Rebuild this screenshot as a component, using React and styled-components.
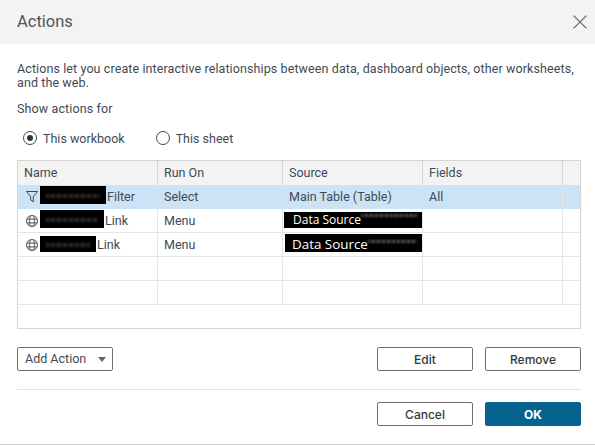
import React from "react";
import styled, { createGlobalStyle } from "styled-components";

const Global = createGlobalStyle`
  html, body { margin: 0; padding: 0; background: #fff; }
  #root { width: 595px; height: 445px; overflow: hidden; }
`;

const Dialog = styled.div`
  width: 595px;
  height: 445px;
  box-sizing: border-box;
  border-bottom: 1px solid #cbcbcb;
  display: flex;
  flex-direction: column;
  font-family: "Roboto", "Liberation Sans", sans-serif;
  font-size: 12.5px;
  color: #3f4a55;
  background: #fff;
`;

const Header = styled.header`
  height: 44px;
  flex: none;
  background: #f3f3f3;
  display: flex;
  align-items: center;
  justify-content: space-between;
  padding: 0 8px 0 17px;
`;

const Title = styled.h1`
  margin: 0 0 2px;
  font-size: 16.5px;
  font-weight: 400;
  color: #4e5459;
`;

const Close = styled.svg`
  width: 14px;
  height: 14px;
`;

const Body = styled.main`
  padding: 18px 14px 0 17px;
  display: flex;
  flex-direction: column;
`;

const Description = styled.p`
  margin: 0;
  width: 564px;
  line-height: 14px;
  letter-spacing: 0.1px;
`;

const SectionLabel = styled.div`
  margin-top: 12px;
  line-height: 14px;
  letter-spacing: 0.12px;
`;

const RadioRow = styled.div`
  display: flex;
  gap: 31px;
  margin: 15px 0 0 6px;
  height: 14px;
  align-items: center;
`;

const RadioOption = styled.label`
  display: flex;
  align-items: center;
  gap: 6px;
`;

const RadioDot = styled.span`
  width: 14px;
  height: 14px;
  box-sizing: border-box;
  border: 1px solid #444;
  border-radius: 50%;
  display: flex;
  align-items: center;
  justify-content: center;
  &::after {
    content: "";
    width: 6px;
    height: 6px;
    border-radius: 50%;
    background: ${p => (p.$on ? "#333" : "transparent")};
  }
`;

const Table = styled.div`
  margin-top: 15px;
  width: 564px;
  height: 169px;
  box-sizing: border-box;
  border: 1px solid #d4d4d4;
  display: flex;
  flex-direction: column;
`;

const Row = styled.div`
  height: 24px;
  box-sizing: border-box;
  flex: none;
  display: grid;
  grid-template-columns: 140px 125px 140px 140px 17px;
  background: ${p => (p.$head ? "#f3f3f3" : "#fff")};
  border-bottom: 1px solid ${p => (p.$head ? "#f3f3f3" : "#e6e6e6")};
  ${p => p.$selected && "background: #cce3f6; border-bottom-color: #cce3f6;"}
`;

const Cell = styled.div`
  box-sizing: border-box;
  height: 24px;
  margin-bottom: -1px;
  padding: 0 0 2px 6px;
  display: flex;
  align-items: center;
  white-space: nowrap;
  min-width: 0;
  border-right: ${p => (p.$last ? "none" : `1px solid ${p.$head ? "#d4d4d4" : "#e6e6e6"}`)};
  ${p => p.$selected && "border-right-color: #cce3f6;"}
`;

const RowIcon = styled.svg`
  width: 12px;
  height: 12px;
  flex: none;
  margin: 2px 2px 0 2px;
`;

const Redaction = styled.span`
  display: block;
  flex: none;
  width: ${p => p.$w}px;
  height: ${p => p.$h}px;
  margin: 0 1px ${p => p.$lift}px 0;
  background: #000;
  overflow: hidden;
  position: relative;
  &::after {
    content: "";
    position: absolute;
    left: 6px;
    right: 6px;
    top: 45%;
    height: 4px;
    filter: blur(1.2px);
    background: repeating-linear-gradient(90deg, #2a2a2a 0 3px, #0a0a0a 3px 5px, #333 5px 6px);
  }
`;

const SourceCell = styled(Cell)`
  padding: 0 0 0 1px;
  align-items: flex-start;
`;

const SourceBlock = styled.span`
  flex: none;
  width: ${p => 138 - p.$left}px;
  height: ${p => p.$h}px;
  margin-top: ${p => p.$top}px;
  margin-left: ${p => p.$left}px;
  background: #000;
  color: #fff;
  font-family: "Open Sans", "Liberation Sans", sans-serif;
  font-size: ${p => p.$size}px;
  line-height: 16px;
  display: flex;
  align-items: ${p => (p.$low ? "flex-end" : "center")};
  padding-left: ${p => p.$pad}px;
  box-sizing: border-box;
  overflow: hidden;
  &::after {
    content: "";
    flex: 1;
    height: 3px;
    margin: 0 5px 9px 0;
    filter: blur(1px);
    background: repeating-linear-gradient(90deg, #555 0 2px, #1a1a1a 2px 4px, #666 4px 5px);
  }
`;

const Footer = styled.div`
  padding: 0 14px 0 17px;
  display: flex;
  flex-direction: column;
`;

const ActionRow = styled.div`
  margin-top: 18px;
  display: flex;
  justify-content: space-between;
`;

const ButtonGroup = styled.div`
  display: flex;
  gap: 12px;
`;

const Button = styled.button`
  width: 96px;
  height: 24px;
  padding: 0;
  box-sizing: border-box;
  border: 1px solid ${p => (p.$primary ? "#06638d" : "#6f6f6f")};
  border-radius: 2px;
  background: ${p => (p.$primary ? "#06638d" : "#fff")};
  color: ${p => (p.$primary ? "#fff" : "#33383d")};
  font-family: "Inter", "Liberation Sans", sans-serif;
  font-size: 12px;
  font-weight: ${p => (p.$primary ? 700 : 500)};
`;

const MenuButton = styled(Button)`
  display: flex;
  align-items: center;
  justify-content: space-between;
  padding: 0 6px 1px 7px;
  font-family: "Roboto", "Liberation Sans", sans-serif;
  font-size: 12.5px;
  font-weight: 400;
  color: #3f4a55;
`;

const Caret = styled.span`
  width: 0;
  height: 0;
  border-left: 4px solid transparent;
  border-right: 4px solid transparent;
  border-top: 5px solid #666;
  margin-top: 2px;
`;

const Divider = styled.hr`
  margin: 18px 0 0;
  width: 564px;
  height: 1px;
  border: 0;
  background: #e1e1e1;
`;

const ConfirmRow = styled(ButtonGroup)`
  margin-top: 12px;
  justify-content: flex-end;
`;

const FilterIcon = () => (
  <RowIcon viewBox="0.5 1 12 12" fill="none" stroke="#444" strokeWidth="1">
    <path d="M1 1.5h11L7.8 6.6v5.2L5.2 10V6.6z" strokeLinejoin="round" />
  </RowIcon>
);

const GlobeIcon = () => (
  <RowIcon viewBox="0.7 0.7 11.6 11.6" fill="none" stroke="#666" strokeWidth="1">
    <circle cx="6.5" cy="6.5" r="5.3" />
    <ellipse cx="6.5" cy="6.5" rx="2.4" ry="5.3" />
    <path d="M1.4 4.7h10.2M1.4 8.3h10.2" />
  </RowIcon>
);

const rows = [
  { icon: <FilterIcon />, w: 66, h: 18, lift: 2, name: "Filter", run: "Select", source: "Main Table (Table)", fields: "All", selected: true },
  { icon: <GlobeIcon />, w: 64, h: 18, lift: 2, name: "Link", run: "Menu", block: { h: 16, top: 3, left: 0, pad: 9, size: 12 } },
  { icon: <GlobeIcon />, w: 56, h: 16, lift: 0, name: "Link", run: "Menu", block: { h: 18, top: 1, left: 1, pad: 7, size: 13.4, low: true } },
];

export default function App() {
  return (
    <Dialog>
      <Global />
      <Header>
        <Title>Actions</Title>
        <Close viewBox="1 1 12 12" fill="none" stroke="#666" strokeWidth="1.1">
          <path d="M1.5 1.5l11 11M12.5 1.5l-11 11" />
        </Close>
      </Header>
      <Body>
        <Description>
          Actions let you create interactive relationships between data, dashboard objects, other worksheets, and the web.
        </Description>
        <SectionLabel>Show actions for</SectionLabel>
        <RadioRow>
          <RadioOption><RadioDot $on />This workbook</RadioOption>
          <RadioOption><RadioDot />This sheet</RadioOption>
        </RadioRow>
        <Table>
          <Row $head>
            <Cell $head>Name</Cell>
            <Cell $head>Run On</Cell>
            <Cell $head>Source</Cell>
            <Cell $head>Fields</Cell>
            <Cell $head $last />
          </Row>
          {rows.map((r, i) => (
            <Row key={i} $selected={r.selected}>
              <Cell $selected={r.selected}>
                {r.icon}
                <Redaction $w={r.w} $h={r.h} $lift={r.lift} />
                {r.name}
              </Cell>
              <Cell $selected={r.selected}>{r.run}</Cell>
              {r.block ? (
                <SourceCell>
                  <SourceBlock {...{ $h: r.block.h, $top: r.block.top, $left: r.block.left, $pad: r.block.pad, $size: r.block.size, $low: r.block.low }}>
                    Data Source
                  </SourceBlock>
                </SourceCell>
              ) : (
                <Cell $selected={r.selected}>{r.source}</Cell>
              )}
              <Cell>{r.fields}</Cell>
              <Cell $last />
            </Row>
          ))}
          {[0, 1].map(i => (
            <Row key={i}>
              <Cell /><Cell /><Cell /><Cell /><Cell $last />
            </Row>
          ))}
        </Table>
      </Body>
      <Footer>
        <ActionRow>
          <MenuButton>Add Action<Caret /></MenuButton>
          <ButtonGroup>
            <Button>Edit</Button>
            <Button>Remove</Button>
          </ButtonGroup>
        </ActionRow>
        <Divider />
        <ConfirmRow>
          <Button>Cancel</Button>
          <Button $primary>OK</Button>
        </ConfirmRow>
      </Footer>
    </Dialog>
  );
}
